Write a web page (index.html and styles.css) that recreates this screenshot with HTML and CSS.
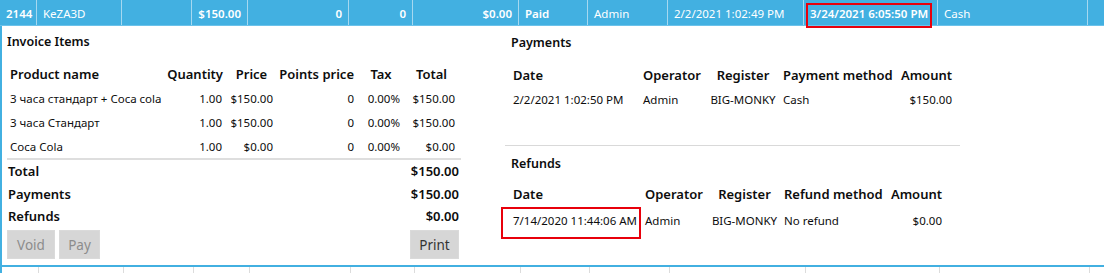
FILE: index.html
```html
<!DOCTYPE html>
<html>
<head>
<meta charset="utf-8">
<link rel="stylesheet" href="styles.css">
</head>
<body>
<div class="grid-row selected">
  <div class="c b">2144</div>
  <div class="c">KeZA3D</div>
  <div class="c"></div>
  <div class="c r b">$150.00</div>
  <div class="c r b">0</div>
  <div class="c r b">0</div>
  <div class="c r b">$0.00</div>
  <div class="c b">Paid</div>
  <div class="c">Admin</div>
  <div class="c">2/2/2021 1:02:49 PM</div>
  <div class="c b mark mark-top">3/24/2021 6:05:50 PM</div>
  <div class="c">Cash</div>
  <div class="c last"></div>
</div>

<div class="detail">
  <div class="left">
    <div class="title">Invoice Items</div>
    <div class="items">
      <div class="ih al-l">Product name</div>
      <div class="ih al-r">Quantity</div>
      <div class="ih al-c">Price</div>
      <div class="ih al-r">Points price</div>
      <div class="ih al-c">Tax</div>
      <div class="ih al-c">Total</div>

      <div class="id al-l">3 часа стандарт + Coca cola</div>
      <div class="id al-r">1.00</div>
      <div class="id al-r">$150.00</div>
      <div class="id al-r">0</div>
      <div class="id al-r">0.00%</div>
      <div class="id al-r">$150.00</div>

      <div class="id al-l">3 часа Стандарт</div>
      <div class="id al-r">1.00</div>
      <div class="id al-r">$150.00</div>
      <div class="id al-r">0</div>
      <div class="id al-r">0.00%</div>
      <div class="id al-r">$150.00</div>

      <div class="id al-l">Coca Cola</div>
      <div class="id al-r">1.00</div>
      <div class="id al-r">$0.00</div>
      <div class="id al-r">0</div>
      <div class="id al-r">0.00%</div>
      <div class="id al-r">$0.00</div>
    </div>
    <div class="totals">
      <div class="trow"><span>Total</span><span>$150.00</span></div>
      <div class="trow"><span>Payments</span><span>$150.00</span></div>
      <div class="trow"><span>Refunds</span><span>$0.00</span></div>
    </div>
    <div class="buttons">
      <button class="btn btn-void" disabled>Void</button>
      <button class="btn btn-pay" disabled>Pay</button>
      <span class="spacer"></span>
      <button class="btn btn-print">Print</button>
    </div>
  </div>

  <div class="right">
    <div class="section payments">
      <div class="title">Payments</div>
      <div class="ptable pay-cols">
        <div class="ph al-l pad-date">Date</div>
        <div class="ph al-l pad-op">Operator</div>
        <div class="ph al-c">Register</div>
        <div class="ph al-l pad-op">Payment method</div>
        <div class="ph al-r pad-amt">Amount</div>

        <div class="pd al-l pad-date">2/2/2021 1:02:50 PM</div>
        <div class="pd al-l pad-op">Admin</div>
        <div class="pd al-c">BIG-MONKY</div>
        <div class="pd al-l pad-op">Cash</div>
        <div class="pd al-r pad-amt">$150.00</div>
      </div>
    </div>
    <div class="section refunds">
      <div class="title">Refunds</div>
      <div class="ptable ref-cols">
        <div class="ph al-l pad-date">Date</div>
        <div class="ph al-l pad-op">Operator</div>
        <div class="ph al-c">Register</div>
        <div class="ph al-l pad-op">Refund method</div>
        <div class="ph al-r pad-amt">Amount</div>

        <div class="pd al-l pad-date mark mark-ref">7/14/2020 11:44:06 AM</div>
        <div class="pd al-l pad-op">Admin</div>
        <div class="pd al-c">BIG-MONKY</div>
        <div class="pd al-l pad-op">No refund</div>
        <div class="pd al-r pad-amt">$0.00</div>
      </div>
    </div>
  </div>
</div>

<div class="grid-row next">
  <div class="c"></div><div class="c"></div><div class="c"></div><div class="c"></div>
  <div class="c"></div><div class="c"></div><div class="c"></div><div class="c"></div>
  <div class="c"></div><div class="c"></div><div class="c"></div><div class="c"></div>
  <div class="c last"></div>
</div>
</body>
</html>
```

FILE: styles.css
```css
* { box-sizing: border-box; }

html, body {
  margin: 0;
  padding: 0;
  background: #ffffff;
  font-family: "Noto Sans", "Open Sans", sans-serif;
  color: #0d0d0d;
  overflow: hidden;
}

/* ---------- data grid rows ---------- */
.grid-row {
  display: grid;
  grid-template-columns: 37px 85px 70px 56px 101px 64px 106px 69px 80px 136px 134px 150px 16px;
  width: 1104px;
}

.grid-row.selected {
  height: 26px;
  background: #42b0e1;
  color: #ffffff;
  font-size: 11.5px;
  border-bottom: 1px solid #6cc2ea;
}

.grid-row.selected .c {
  border-right: 1px solid #a6d8f0;
  padding: 2px 6px 0 6px;
  line-height: 23px;
  white-space: nowrap;
  overflow: visible;
}

.grid-row .c.r { text-align: right; }
.grid-row .c.b { font-weight: 600; }
.grid-row .c.last { border-right: none; }

.grid-row.next {
  height: 8px;
  border-top: 2px solid #42b0e1;
  border-left: 2px solid #42b0e1;
}

.grid-row.next .c {
  border-right: 1px solid #dcdcdc;
}
.grid-row.next .c:first-child { margin-left: -2px; }

/* red annotation boxes (overlays) */
.mark {
  position: relative;
}
.mark::after {
  content: "";
  position: absolute;
  border: 2px solid #e8000b;
  pointer-events: none;
}
.mark-top::after {
  left: 2px;
  right: 5px;
  top: 3px;
  bottom: -3px;
}
.mark-ref::after {
  left: -4px;
  right: 2px;
  top: -2px;
  bottom: -6px;
}

/* ---------- detail area ---------- */
.detail {
  display: grid;
  grid-template-columns: 463px 455px;
  column-gap: 40px;
  height: 239px;
  border-left: 2px solid #42b0e1;
}

.title {
  font-size: 12.5px;
  font-weight: 600;
  line-height: 20px;
}

/* left panel */
.left {
  padding: 0 4px 0 5px;
}
.left .title {
  padding: 6px 0 10px 0;
}

.items {
  display: grid;
  grid-template-columns: 158px 61px 51px 81px 46px 55px;
  border-bottom: 2px solid #dedede;
}

.ih {
  font-size: 13px;
  font-weight: 600;
  height: 25px;
  line-height: 25px;
  white-space: nowrap;
}
.id {
  font-size: 11.5px;
  height: 24px;
  line-height: 24px;
  white-space: nowrap;
}
.items .id:nth-last-child(-n+6) {
  height: 23px;
}

.al-l { text-align: left; padding-left: 3px; }
.al-r { text-align: right; padding-right: 4px; }
.al-c { text-align: center; }
.items .ih.al-r:nth-child(2) { padding-right: 3px; }

.trow {
  display: flex;
  justify-content: space-between;
  font-size: 13px;
  font-weight: 600;
  height: 22.5px;
  line-height: 22px;
  padding: 0 2px 0 1px;
}

.buttons {
  display: flex;
  gap: 4px;
  margin-top: 2.5px;
  padding-right: 2px;
}
.spacer { flex: 1; }
.btn {
  height: 29px;
  border: 1px solid #dadada;
  background: #d6d6d6;
  font-family: "Noto Sans", "Open Sans", sans-serif;
  font-size: 13.5px;
  padding: 0;
  color: #333;
}
.btn[disabled] { color: #8c8c8c; }
.btn-void { width: 48px; }
.btn-pay { width: 41px; }
.btn-print { width: 49px; }

/* right panel */
.section .title {
  padding: 7px 0 0 6px;
  height: 37px;
}
.payments {
  height: 120px;
  border-bottom: 1px solid #d9d9d9;
}
.refunds .title {
  padding-top: 8px;
  height: 36px;
}

.ptable {
  display: grid;
}
.pay-cols { grid-template-columns: 136px 64px 76px 114px 60px; }
.ref-cols { grid-template-columns: 138px 64px 75px 106px 57px; }

.ph {
  font-size: 13px;
  font-weight: 600;
  height: 25px;
  line-height: 25px;
  white-space: nowrap;
}
.ref-cols .ph { height: 27px; line-height: 25px; }
.pd {
  font-size: 11.5px;
  height: 24px;
  line-height: 24px;
  white-space: nowrap;
}
.pad-date { padding-left: 8px; }
.pad-op { padding-left: 2px; }
.pad-amt { padding-right: 3px; }
```
